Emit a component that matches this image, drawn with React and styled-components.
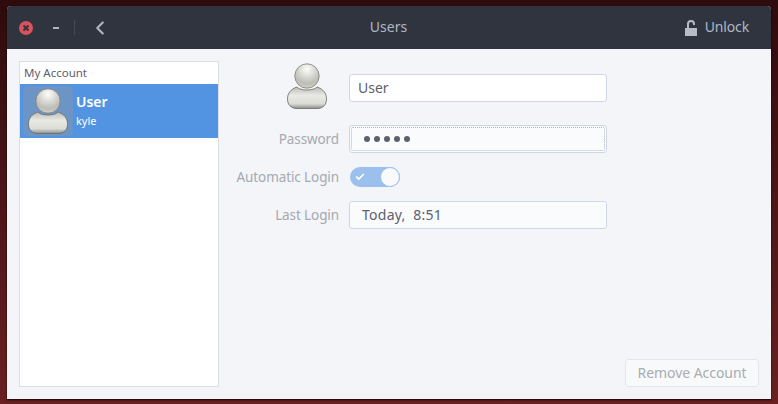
import React from "react";
import styled, { createGlobalStyle } from "styled-components";
import { Check, ChevronLeft } from "lucide-react";

const GlobalStyle = createGlobalStyle`
  html, body {
    margin: 0;
    padding: 0;
    height: 100%;
    overflow: hidden;
  }
  #root {
    height: 100%;
  }
`;

function Avatar() {
  return (
    <svg width="40" height="46" viewBox="0 0 40 46">
      <defs>
        <radialGradient id="headFill" cx="0.5" cy="0.22" r="0.75">
          <stop offset="0" stopColor="#fdfdfb" />
          <stop offset="0.4" stopColor="#dcdcd7" />
          <stop offset="0.8" stopColor="#bcbcb5" />
          <stop offset="1" stopColor="#cfcfc9" />
        </radialGradient>
        <linearGradient id="bodyFill" x1="0" y1="0" x2="0" y2="1">
          <stop offset="0" stopColor="#bdbdb7" />
          <stop offset="0.4" stopColor="#e9e9e5" />
          <stop offset="0.78" stopColor="#dcdcd7" />
          <stop offset="1" stopColor="#8d8d87" />
        </linearGradient>
      </defs>
      <path
        d="M10 24C4 26 .5 30 .5 36C.5 42 4 45 9 45.500H31C36 45 39.500 42 39.500 36C39.500 30 36 26 30 24C27 28 13 28 10 24Z"
        fill="url(#bodyFill)"
        stroke="#6b6b66"
        strokeWidth="0.8"
      />
      <circle cx="20" cy="13" r="12.200" fill="url(#headFill)" stroke="#7d7d78" strokeWidth="0.8" />
    </svg>
  );
}

function LockIcon() {
  return (
    <svg width="12" height="16" viewBox="0 0 12 16">
      <path d="M3 8V4C3 2 4.300 1 6 1S9 2 9 4V5" fill="none" stroke="#b6bdc9" strokeWidth="2" />
      <rect x="0" y="8" width="12" height="8" fill="#b6bdc9" />
    </svg>
  );
}

function CloseIcon() {
  return (
    <svg width="14" height="14" viewBox="0 0 14 14">
      <circle cx="7" cy="7" r="7" fill="#d9525e" />
      <path d="M4.500 4.500L9.500 9.500M9.500 4.500L4.500 9.500" stroke="#2f343f" strokeWidth="2" />
    </svg>
  );
}

export default function App() {
  return (
    <Desktop>
      <GlobalStyle />
      <Window>
        <Header>
          <HeaderLeft>
            <CloseIcon />
            <Minimize />
            <Separator />
            <BackButton>
              <ChevronLeft size={22} strokeWidth={2.4} />
            </BackButton>
          </HeaderLeft>
          <Title>Users</Title>
          <UnlockButton>
            <LockIcon />
            <UnlockLabel>Unlock</UnlockLabel>
          </UnlockButton>
        </Header>
        <Content>
          <Sidebar>
            <SidebarHeading>My Account</SidebarHeading>
            <UserRow>
              <AvatarTile>
                <Avatar />
              </AvatarTile>
              <UserText>
                <UserName>User</UserName>
                <UserLogin>kyle</UserLogin>
              </UserText>
            </UserRow>
          </Sidebar>
          <Details>
            <Form>
              <AvatarCell>
                <Avatar />
              </AvatarCell>
              <NameInput>User</NameInput>
              <Label>Password</Label>
              <PasswordInput>
                <FocusRing>
                  {[0, 1, 2, 3, 4].map((dot) => (
                    <Dot key={dot} />
                  ))}
                </FocusRing>
              </PasswordInput>
              <Label>Automatic Login</Label>
              <Switch>
                <SwitchCheck>
                  <Check size={10} strokeWidth={4} color="#fff" />
                </SwitchCheck>
                <SwitchKnob />
              </Switch>
              <Label>Last Login</Label>
              <ValueField>Today,&nbsp;&nbsp;8:51</ValueField>
            </Form>
            <Footer>
              <RemoveButton>Remove Account</RemoveButton>
            </Footer>
          </Details>
        </Content>
      </Window>
    </Desktop>
  );
}

const Desktop = styled.div`
  box-sizing: border-box;
  width: 778px;
  height: 404px;
  padding: 6px 7px 5px 7px;
  background: linear-gradient(180deg, #2e0b0c 0%, #4a1416 45%, #6a2021 100%);
  font-family: "Noto Sans", "Open Sans", sans-serif;
`;

const Window = styled.div`
  display: flex;
  flex-direction: column;
  height: 100%;
  border-radius: 4px 4px 0 0;
  overflow: hidden;
  background: #f4f5f8;
  box-shadow: 0 1px 2px rgba(0, 0, 0, 0.9);
`;

const Header = styled.header`
  position: relative;
  flex: none;
  display: flex;
  align-items: center;
  justify-content: space-between;
  height: 43px;
  padding: 0 22px 0 12px;
  background: #2f343f;
`;

const HeaderLeft = styled.div`
  display: flex;
  align-items: center;
`;

const Minimize = styled.span`
  width: 6px;
  height: 2px;
  margin-left: 20px;
  background: #aeb4c0;
`;

const Separator = styled.span`
  width: 1px;
  height: 15px;
  margin-left: 15px;
  background: #454a56;
`;

const BackButton = styled.span`
  display: flex;
  margin-left: 14px;
  color: #aeb4c0;
`;

const Title = styled.div`
  position: absolute;
  left: 0;
  right: 1px;
  padding-bottom: 2px;
  text-align: center;
  color: #afb8c6;
  font-size: 14px;
  pointer-events: none;
`;

const UnlockButton = styled.div`
  display: flex;
  align-items: center;
  gap: 8px;
  color: #afb8c6;
  font-size: 14px;
`;

const UnlockLabel = styled.span`
  padding-bottom: 2px;
  letter-spacing: -0.15px;
`;

const Content = styled.div`
  flex: 1;
  min-height: 0;
  display: flex;
  padding: 12px 12px 12px 12px;
`;

const Sidebar = styled.aside`
  box-sizing: border-box;
  flex: none;
  width: 200px;
  border: 1px solid #dcdfe3;
  background: #fff;
`;

const SidebarHeading = styled.div`
  height: 22px;
  padding-left: 4px;
  line-height: 21px;
  color: #5c616c;
  font-size: 11.500px;
`;

const UserRow = styled.div`
  display: flex;
  align-items: center;
  height: 54px;
  background: #5294e2;
`;

const AvatarTile = styled.div`
  box-sizing: border-box;
  display: flex;
  align-items: center;
  justify-content: center;
  width: 50px;
  height: 50px;
  margin-left: 3px;
  border-radius: 5px;
  background: rgba(130, 150, 175, 0.55);
`;

const UserText = styled.div`
  display: flex;
  flex-direction: column;
  margin-left: 3px;
  padding-bottom: 2px;
  color: #fff;
`;

const UserName = styled.span`
  font-size: 14px;
  font-weight: 600;
  line-height: 20px;
`;

const UserLogin = styled.span`
  font-size: 11px;
  line-height: 17px;
`;

const Details = styled.main`
  flex: 1;
  min-width: 0;
  display: flex;
  flex-direction: column;
`;

const Form = styled.div`
  display: grid;
  grid-template-columns: 108px 258px;
  grid-template-rows: 50px 28px 20px 28px;
  column-gap: 10px;
  row-gap: 14px;
  margin-left: 12px;
  align-items: center;
`;

const AvatarCell = styled.div`
  display: flex;
  justify-content: flex-end;
  margin-right: 12px;
`;

const Label = styled.div`
  padding-bottom: 1px;
  text-align: right;
  color: #a6a9b0;
  font-size: 13.500px;
  letter-spacing: -0.1px;
  white-space: nowrap;
`;

const FieldBox = styled.div`
  box-sizing: border-box;
  display: flex;
  align-items: center;
  height: 28px;
  border: 1px solid #cfd6e6;
  border-radius: 3px;
  color: #5c616c;
  font-size: 14px;
`;

const NameInput = styled(FieldBox)`
  align-self: start;
  margin-top: 13px;
  padding: 0 0 2px 8px;
  background: #fff;
`;

const PasswordInput = styled(FieldBox)`
  padding: 1px;
  background: #fafbfc;
`;

const FocusRing = styled.div`
  box-sizing: border-box;
  flex: 1;
  display: flex;
  align-items: center;
  gap: 4px;
  height: 100%;
  padding: 0 0 1px 12px;
  border: 1px dotted #b4b6bb;
  border-radius: 2px;
`;

const Dot = styled.span`
  width: 6px;
  height: 6px;
  border-radius: 50%;
  background: #5c616c;
`;

const Switch = styled.div`
  display: flex;
  align-items: center;
  justify-content: space-between;
  width: 50px;
  height: 20px;
  margin-left: 1px;
  border-radius: 10px;
  background: #9bc0ed;
`;

const SwitchCheck = styled.span`
  display: flex;
  margin-left: 5px;
`;

const SwitchKnob = styled.span`
  box-sizing: border-box;
  width: 20px;
  height: 20px;
  border: 1px solid #9bc0ed;
  border-radius: 50%;
  background: #f8fafc;
`;

const ValueField = styled(FieldBox)`
  padding: 0 0 1px 12px;
  background: #fafbfc;
  letter-spacing: 0.25px;
`;

const Footer = styled.div`
  margin-top: auto;
  display: flex;
  justify-content: flex-end;
`;

const RemoveButton = styled.div`
  box-sizing: border-box;
  display: flex;
  align-items: center;
  justify-content: center;
  width: 134px;
  height: 28px;
  padding-bottom: 1px;
  border: 1px solid #e3e6ec;
  border-radius: 3px;
  background: #f8f9fb;
  color: #a9acb2;
  font-size: 14px;
  letter-spacing: -0.05px;
`;
